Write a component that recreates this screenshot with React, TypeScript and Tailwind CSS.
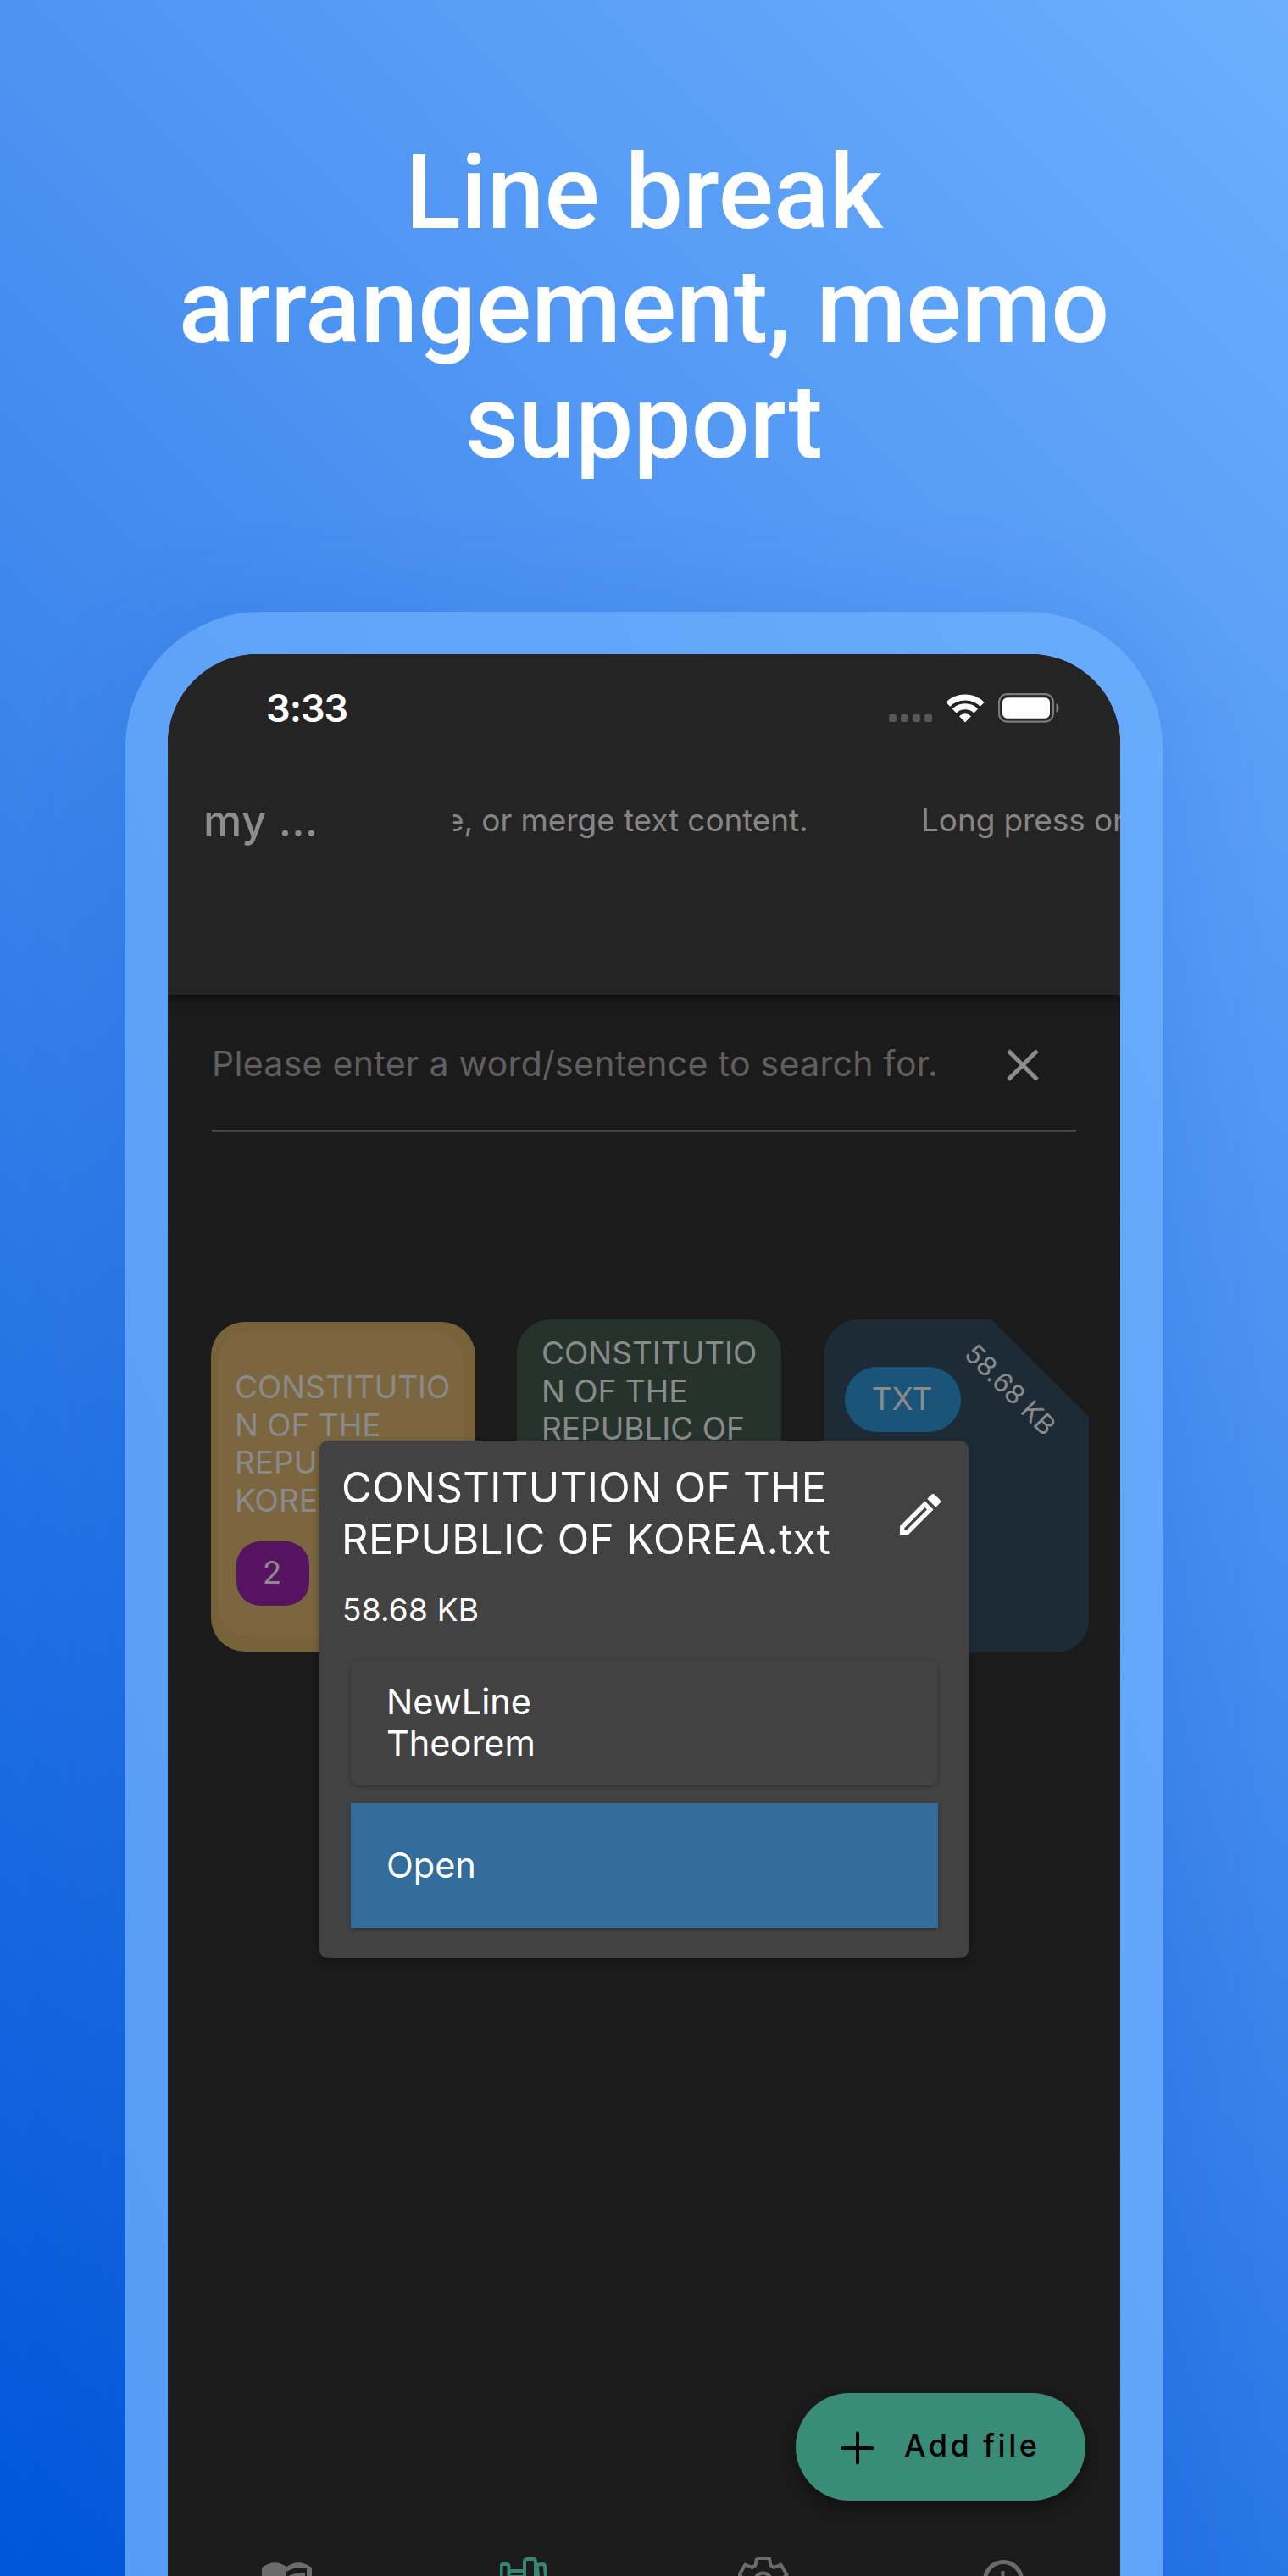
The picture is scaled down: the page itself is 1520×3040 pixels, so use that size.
import { ReactNode } from "react";

function StatusBar() {
  return (
    <div className="flex h-[128px] items-start pl-[116px] pr-[71px]">
      <div className="mt-[34px] text-[45px] font-semibold leading-[60px] tracking-[-1px] text-white">3:33</div>
      <div className="ml-auto mt-[47px] flex items-start">
        <svg width="52" height="10" viewBox="0 0 52 10" className="mt-[24px]" fill="#575757">
          <rect x="0" width="9" height="9" rx="2.5" />
          <rect x="14" width="9" height="9" rx="2.5" />
          <rect x="28" width="9" height="9" rx="2.5" />
          <rect x="42" width="9" height="9" rx="2.5" />
        </svg>
        <svg width="46" height="34" viewBox="0 0 46 34" className="ml-[15px]" fill="none" stroke="#fff">
          <path d="M2.8 12.2a29 29 0 0 1 40.4 0" strokeWidth="7" />
          <path d="M10.2 20a18.5 18.5 0 0 1 25.6 0" strokeWidth="7" />
          <path d="M16 26.2a10 10 0 0 1 14 0L23 33.5z" fill="#fff" stroke="none" />
        </svg>
        <svg width="73" height="36" viewBox="0 0 73 36" className="ml-[16px] mt-[-1px]">
          <rect x="1" y="1.2" width="64" height="36" rx="9.5" fill="none" />
          <rect x="1" y="1.2" width="64" height="32.5" rx="9.5" fill="none" stroke="#7c7c7c" strokeWidth="2.2" />
          <rect x="5" y="5.3" width="56" height="24.4" rx="5.5" fill="#fff" />
          <path d="M68.5 12a6.5 6.5 0 0 1 0 11z" fill="#7c7c7c" />
        </svg>
      </div>
    </div>
  );
}

function Header() {
  return (
    <div className="relative z-10 h-[402px] shrink-0 bg-[#242424] shadow-[0_3px_12px_rgba(0,0,0,0.6)]">
      <StatusBar />
      <div className="flex h-[140px] items-start whitespace-nowrap text-[#8d8d8d]">
        <div className="ml-[42px] mt-[33px] w-[295px] text-[51px] font-medium leading-[72px] tracking-[0.4px]">my …</div>
        <div className="mt-[40px] h-[56px] w-[787px] overflow-hidden text-[37px] leading-[56px] tracking-[-0.1px] text-[#868686]">
          <div className="flex">
            <span className="-ml-[9px] w-[561px] shrink-0">e, or merge text content.</span>
            <span className="shrink-0">Long press on</span>
          </div>
        </div>
      </div>
    </div>
  );
}

function SearchField() {
  return (
    <div className="mx-[52px] flex h-[162px] shrink-0 items-center border-b-[3px] border-[#424242]">
      <span className="mt-[4px] whitespace-nowrap text-[41px] tracking-[0.3px] text-[#5f5f5f]">
        Please enter a word/sentence to search for.
      </span>
      <svg width="38" height="38" viewBox="0 0 38 38" className="ml-auto mr-[44px] mt-[6px]" stroke="#8c8c8c" strokeWidth="5">
        <path d="M2 2l34 34M36 2L2 36" />
      </svg>
    </div>
  );
}

function FileCards() {
  return (
    <div className="mt-[221px] flex shrink-0 items-start pl-[51px] text-[37px] leading-[44.7px] text-[#8a8a8a]">
      <div className="mt-[3px] h-[389px] w-[312px] rounded-[40px] bg-[#77623a] pl-[8px] pt-[11px]">
        <div className="h-[360px] w-[290px] rounded-[36px] bg-[#7b6640] pl-[20px] pt-[44px]">
          <p className="w-[262px]">
            CONSTITUTIO
            <br />N OF THE
            <br />
            REPUBLIC OF
            <br />
            KOREA.txt
          </p>
          <div className="ml-[2px] mt-[25px] flex h-[76px] w-[86px] items-center justify-center rounded-[28px] bg-[#561460] pr-[2px]">
            2
          </div>
        </div>
      </div>
      <div className="ml-[49px] h-[393px] w-[312px] rounded-[40px] bg-[#25332c] pl-[29px] pt-[18px]">
        CONSTITUTIO
        <br />N OF THE
        <br />
        REPUBLIC OF
      </div>
      <div className="relative ml-[51px] h-[393px] w-[312px] overflow-hidden rounded-l-[40px] rounded-br-[38px] bg-[#1c2b36] pl-[24px] pt-[56px] [clip-path:polygon(0_0,197px_0,312px_115px,312px_100%,0_100%)]">
        <div className="flex h-[77px] w-[137px] items-center justify-center rounded-full bg-[#1a5579] pr-[2px]">TXT</div>
        <div className="absolute left-[144px] top-[63px] w-[150px] rotate-45 whitespace-nowrap text-center text-[31.5px] leading-[40px]">
          58.68 KB
        </div>
      </div>
    </div>
  );
}

function DialogItem({ className, children }: { className: string; children: ReactNode }) {
  return <div className={"flex items-center pl-[42px] text-[41.5px] leading-[49.5px] " + className}>{children}</div>;
}

function FileDialog() {
  return (
    <div className="absolute left-[179px] top-[928px] z-20 h-[611px] w-[766px] rounded-[10px] bg-[#424242] text-white shadow-[0_4px_10px_rgba(0,0,0,0.3)]">
      <div className="flex items-center pl-[26px] pr-[25px] pt-[26px]">
        <div className="whitespace-nowrap text-[49px] leading-[60.7px] tracking-[0.4px]">
          CONSTITUTION OF THE
          <br />
          REPUBLIC OF KOREA.txt
        </div>
        <svg width="64" height="64" viewBox="0 0 24 24" fill="#fff" className="ml-auto">
          <path d="M14.06 9L15 9.94L5.92 19H5v-.92L14.06 9m3.6-6c-.25 0-.51.1-.7.29l-1.83 1.83l3.75 3.75l1.83-1.83c.39-.39.39-1.04 0-1.41l-2.34-2.34c-.2-.2-.45-.29-.71-.29m-3.6 3.19L3 17.25V21h3.75L17.81 9.94l-3.75-3.75z" />
        </svg>
      </div>
      <div className="pl-[27px] pt-[28px] text-[37px] leading-[50px] tracking-[0.2px]">58.68 KB</div>
      <div className="ml-[37px] mt-[34px] flex w-[693px] flex-col gap-[21px]">
        <DialogItem className="h-[148px] rounded-[10px] shadow-[0_2px_4px_rgba(0,0,0,0.25)]">
          <span>
            NewLine
            <br />
            Theorem
          </span>
        </DialogItem>
        <DialogItem className="h-[147px] bg-[#326c9b] shadow-[0_2px_4px_rgba(0,0,0,0.25)]">Open</DialogItem>
      </div>
    </div>
  );
}

function BottomBar() {
  return (
    <div className="flex h-[90px] items-start overflow-hidden">
      <svg width="60" height="60" viewBox="0 0 60 60" className="ml-[111px] mt-[14px]" fill="#6b6b6b">
        <path d="M0 6Q15 -5 29 5Q44 -5 59 6V50Q44 40 29 50Q15 40 0 50z" />
        <path d="M29 11Q41 4 53 7V42Q41 40 29 46z" fill="#1b1b1b" />
        <path d="M32 15.500Q42 11.500 51 12.500V19Q42 18 32 22z" />
      </svg>
      <svg width="60" height="60" viewBox="0 0 60 60" className="ml-[221px] mt-[8px]" fill="none" stroke="#348873" strokeWidth="4">
        <path d="M1.500 60V11q0-3 3-3h3q3 0 3 3v49M12 16h15M12 23h15M29 60V5q0-3 3-3h7q3 0 3 3v55M43 9l7-1q3 0 3 3l4 49M44 11l4 49" />
      </svg>
      <svg width="60" height="60" viewBox="0 0 60 60" className="ml-[221px] mt-[7px]" fill="none" stroke="#6b6b6b" strokeWidth="4" strokeLinejoin="round">
        <path d="M22 2h15l1.500 8.500 4 2.500 8-3.500 7 12-6.500 6M22 2l-1.500 8.500-4 2.500-8-3.500-7 12 6.500 6" />
        <circle cx="29.500" cy="29" r="9.500" />
      </svg>
      <svg width="48" height="60" viewBox="0 0 48 60" className="ml-[229px] mt-[11px]" fill="none" stroke="#6b6b6b" strokeWidth="5">
        <circle cx="24" cy="24" r="21.500" />
        <path d="M23.500 13v14" strokeWidth="4" />
      </svg>
    </div>
  );
}

function Phone() {
  return (
    <div className="mx-auto h-[2650px] w-[1224px] rounded-[160px] bg-gradient-to-tr from-[#559af5] to-[#69abfb] p-[50px] shadow-[0_0_120px_rgba(10,80,200,0.15)]">
      <div className="relative flex h-[2550px] flex-col overflow-hidden rounded-[106px] bg-[#1b1b1b] font-[Inter,sans-serif]">
        <Header />
        <SearchField />
        <FileCards />
        <div className="ml-auto mr-[41px] mt-[874px] flex h-[127px] w-[342px] shrink-0 items-center rounded-full bg-[#398c78] pl-[53px] text-[36px] font-medium text-black shadow-[0_8px_16px_rgba(0,0,0,0.4)]">
          <svg width="40" height="40" viewBox="0 0 40 40" className="mr-[35px] mt-[2px]" stroke="#000" strokeWidth="4" strokeLinecap="round">
            <path d="M20 2.500v35M2.500 20h35" />
          </svg>
          <span className="mb-[3px] tracking-[3.5px]">Add file</span>
        </div>
        <div className="mt-[59px]">
          <BottomBar />
        </div>
        <FileDialog />
      </div>
    </div>
  );
}

export default function App() {
  return (
    <main className="h-[3040px] w-[1520px] overflow-hidden bg-[linear-gradient(45deg,#0055d9_0%,#3d86ec_50%,#6daffe_100%)]">
      <h1 className="h-[722px] pt-[160px] text-center font-[Roboto,sans-serif] text-[121.5px] font-medium leading-[135.3px] text-white">
        Line break
        <br />
        arrangement, memo
        <br />
        support
      </h1>
      <Phone />
    </main>
  );
}
